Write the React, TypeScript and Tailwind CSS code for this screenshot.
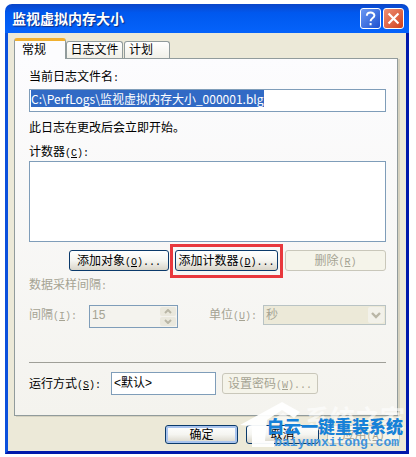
import { useEffect, useRef } from "react";
import type { ReactNode } from "react";
import clsx from "clsx";

const latin = "font-['Liberation_Mono','Noto_Sans_CJK_SC',monospace] text-[10px] leading-none";

// Label text followed by its keyboard accelerator, e.g. 删除(R)
function Accel({ text, letter, tail = "" }: { text: string; letter: string; tail?: string }) {
  return (
    <span className="whitespace-nowrap">
      {text}
      <span className={latin}>
        (<u>{letter}</u>){tail}
      </span>
    </span>
  );
}

function XpButton({
  children,
  className,
  disabled,
  primary,
}: {
  children: ReactNode;
  className?: string;
  disabled?: boolean;
  primary?: boolean;
}) {
  return (
    <button
      type="button"
      disabled={disabled}
      className={clsx(
        "flex shrink-0 items-center justify-center rounded-[3px] border leading-4",
        disabled
          ? "border-[#c9c7ba] bg-[#f5f4ea] text-[#a5a393]"
          : "border-[#0b3a6b] bg-linear-to-b from-white via-[#f5f5f1] to-[#d9d5c9] text-black",
        primary && "shadow-[inset_0_0_0_2px_#a9c4ee]",
        className
      )}
    >
      {children}
    </button>
  );
}

function Watermark() {
  return (
    <div className="pointer-events-none absolute right-0 bottom-0 h-[53px] w-[169px]">
      <svg viewBox="0 0 169 53" className="absolute inset-0 h-full w-full" aria-hidden="true">
        <path d="M0 24 L42 1 L60 11 L54 17 L42 9 L27 19 L25 40 L34 40 L34 46 L12 46 L12 25 Z" fill="#fff" fillOpacity="0.95" />
        <path d="M30 20 L43 12 L61 24 L58 30 L44 22 L30 30 Z" fill="#fff" fillOpacity="0.6" />
      </svg>
      <div className="absolute top-0 right-1 font-['Noto_Sans_CJK_SC',sans-serif] text-[25px] leading-8 font-bold whitespace-nowrap text-white/60">
        系统之家
      </div>
      <div className="absolute right-[6px] bottom-[20px] font-['Noto_Sans_CJK_SC',sans-serif] text-[17px] leading-4 font-black whitespace-nowrap text-[#1681d8]">
        白云一键重装系统
      </div>
      <div className="absolute right-[10px] bottom-[3px] font-['Liberation_Mono',monospace] text-[13px] leading-4 font-bold whitespace-nowrap text-[#3f93dc]">
        baiyunxitong.com
      </div>
    </div>
  );
}

export default function App() {
  const logName = useRef<HTMLInputElement>(null);

  useEffect(() => {
    logName.current?.focus();
    logName.current?.select();
  }, []);

  return (
    <div className="bg-white pt-1 pr-[7px] pb-[3px] pl-[5px] font-['Liberation_Sans','Noto_Sans_CJK_SC',sans-serif] text-xs leading-4 text-black">
      <div className="relative">
        <header className="flex h-[29px] items-center gap-[2px] rounded-t-[7px] bg-linear-to-b from-[#0a45c8] via-[#0058ee] via-30% to-[#0563fb] pr-[5px] pl-[7px]">
          <h1 className="flex-1 text-sm font-bold text-white [text-shadow:1px_1px_1px_#0a2a80]">
            监视虚拟内存大小
          </h1>
          <button
            type="button"
            aria-label="帮助"
            className="flex size-[21px] items-center justify-center rounded-[3px] border border-white bg-linear-to-br from-[#6c98f2] to-[#1d4fd0]"
          >
            <svg viewBox="0 0 21 21" className="size-[19px]" fill="none" stroke="#fff" strokeWidth="2.2" aria-hidden="true">
              <path d="M6.5 7.5 C6.5 2.8 14.8 2.8 14.8 7.3 C14.8 10 10.6 10 10.6 13.5" />
              <path d="M10.6 15.5 V18" />
            </svg>
          </button>
          <button
            type="button"
            aria-label="关闭"
            className="flex size-[21px] items-center justify-center rounded-[3px] border border-white bg-linear-to-br from-[#ee8f74] to-[#cf3d14]"
          >
            <svg viewBox="0 0 21 21" className="size-[19px]" stroke="#fff" strokeWidth="2.4" aria-hidden="true">
              <path d="M5 5 L16 16 M16 5 L5 16" />
            </svg>
          </button>
        </header>

        <main className="border-x-[3px] border-b-[3px] border-r-[#0019ab] border-b-[#0019ab] border-l-[#0b50dc] bg-[#ece9d8] px-[6px] pt-[5px] pb-[7px]">
          <div role="tablist" className="flex items-end">
            <button
              type="button"
              role="tab"
              aria-selected="true"
              className="relative z-10 -mb-px h-[21px] w-[52px] rounded-t-[3px] border-x border-t-[3px] border-x-[#919b9c] border-t-[#f0b030] bg-[#fcfcfe] pr-3 text-center leading-4"
            >
              常规
            </button>
            <button
              type="button"
              role="tab"
              aria-selected="false"
              className="h-[17px] w-[57px] rounded-t-[3px] border border-b-0 border-[#919b9c] bg-linear-to-b from-white to-[#f1f0e8] leading-4"
            >
              日志文件
            </button>
            <button
              type="button"
              role="tab"
              aria-selected="false"
              className="ml-px h-[17px] w-[46px] rounded-t-[3px] border border-b-0 border-[#919b9c] bg-linear-to-b from-white to-[#f1f0e8] pr-3 text-center leading-4"
            >
              计划
            </button>
          </div>

          <section
            role="tabpanel"
            className="mr-[2px] flex flex-col border border-[#919b9c] bg-linear-to-b from-[#fcfcfe] to-[#f4f3ee] pt-[10px] pr-[11px] pb-5 pl-[14px] shadow-[2px_1px_0_#d6d2c0]"
          >
            <label htmlFor="log-name">
              当前日志文件名<span className={latin}>:</span>
            </label>
            <input
              id="log-name"
              ref={logName}
              readOnly
              defaultValue="C:\PerfLogs\监视虚拟内存大小_000001.blg"
              className="mt-1 h-[23px] w-full border border-[#7f9db9] bg-white px-px pb-1 font-['Noto_Sans_CJK_SC',sans-serif] leading-4 outline-none selection:bg-[#316ac5] selection:text-white"
            />
            <p className="mt-2">此日志在更改后会立即开始。</p>
            <label htmlFor="counters" className="mt-2">
              <Accel text="计数器" letter="C" tail=":" />
            </label>
            <select id="counters" size={4} className="mt-px h-[81px] w-full appearance-none rounded-none border border-solid border-[#7f9db9] bg-white outline-none" />

            <div className="mt-2 flex justify-end">
              <XpButton className="h-[21px] w-[100px]">
                <Accel text="添加对象" letter="O" tail="..." />
              </XpButton>
              <div className="relative mr-[7px] ml-[6px]">
                <XpButton className="h-[21px] w-[103px]">
                  <Accel text="添加计数器" letter="D" tail="..." />
                </XpButton>
                <div className="pointer-events-none absolute -inset-x-[5px] -top-[6px] -bottom-[7px] border-[3px] border-[#e8383d]" />
              </div>
              <XpButton disabled className="h-[21px] w-[101px]">
                <Accel text="删除" letter="R" />
              </XpButton>
            </div>

            <p className="mt-[6px] text-[#a5a393]">
              数据采样间隔<span className={latin}>:</span>
            </p>
            <div className="mt-3 flex items-start text-[#a5a393]">
              <label htmlFor="interval" className="w-[60px] pt-[2px]">
                <Accel text="间隔" letter="I" tail=":" />
              </label>
              <div className="flex h-[23px] w-[89px] border border-[#7f9db9] bg-[#f4f3ee] pr-px">
                <input
                  id="interval"
                  disabled
                  defaultValue="15"
                  className="h-[17px] min-w-0 flex-1 bg-transparent pl-[2px] leading-4"
                />
                <div className="flex w-4 flex-col gap-px py-px">
                  <button type="button" disabled aria-label="增加" className="flex flex-1 items-center justify-center rounded-xs bg-[#eae8dd]">
                    <svg viewBox="0 0 8 5" className="h-[5px] w-2" fill="none" stroke="#b9b6a6" strokeWidth="2" aria-hidden="true">
                      <path d="M1 4 L4 1 L7 4" />
                    </svg>
                  </button>
                  <button type="button" disabled aria-label="减少" className="flex flex-1 items-center justify-center rounded-xs bg-[#eae8dd]">
                    <svg viewBox="0 0 8 5" className="h-[5px] w-2" fill="none" stroke="#b9b6a6" strokeWidth="2" aria-hidden="true">
                      <path d="M1 1 L4 4 L7 1" />
                    </svg>
                  </button>
                </div>
              </div>
              <label htmlFor="unit" className="ml-auto w-[54px] pt-[2px]">
                <Accel text="单位" letter="U" tail=":" />
              </label>
              <div className="relative w-[123px]">
                <select
                  id="unit"
                  disabled
                  className="block h-5 w-full appearance-none border border-[#b9c3c4] bg-[#ece9d8] pl-[2px] leading-4 text-[#a5a393] opacity-100"
                >
                  <option>秒</option>
                </select>
                <div className="pointer-events-none absolute inset-y-[2px] right-[2px] flex w-4 items-center justify-center rounded-xs bg-[#f2f1ea]">
                  <svg viewBox="0 0 10 7" className="h-[7px] w-[10px]" fill="none" stroke="#b9b6a6" strokeWidth="2.4" aria-hidden="true">
                    <path d="M1 1 L5 5 L9 1" />
                  </svg>
                </div>
              </div>
            </div>

            <hr className="mt-[34px] border-t border-[#9f9f98]" />
            <div className="mt-[9px] flex items-center">
              <label htmlFor="run-as" className="w-[82px]">
                <Accel text="运行方式" letter="S" tail=":" />
              </label>
              <input
                id="run-as"
                defaultValue="<默认>"
                className="h-[23px] w-[105px] border border-[#7f9db9] bg-white px-[2px] pb-1 leading-4 outline-none"
              />
              <XpButton disabled className="ml-[6px] h-[21px] w-[96px]">
                <Accel text="设置密码" letter="W" tail="..." />
              </XpButton>
            </div>
          </section>

          <div className="mt-[9px] flex justify-end gap-2">
            <XpButton primary className="h-[19px] w-[73px]">
              确定
            </XpButton>
            <XpButton className="h-[19px] w-[73px]">取消</XpButton>
            <XpButton disabled className="h-[19px] w-[73px]">
              <Accel text="应用" letter="A" />
            </XpButton>
          </div>
        </main>
        <Watermark />
      </div>
    </div>
  );
}
